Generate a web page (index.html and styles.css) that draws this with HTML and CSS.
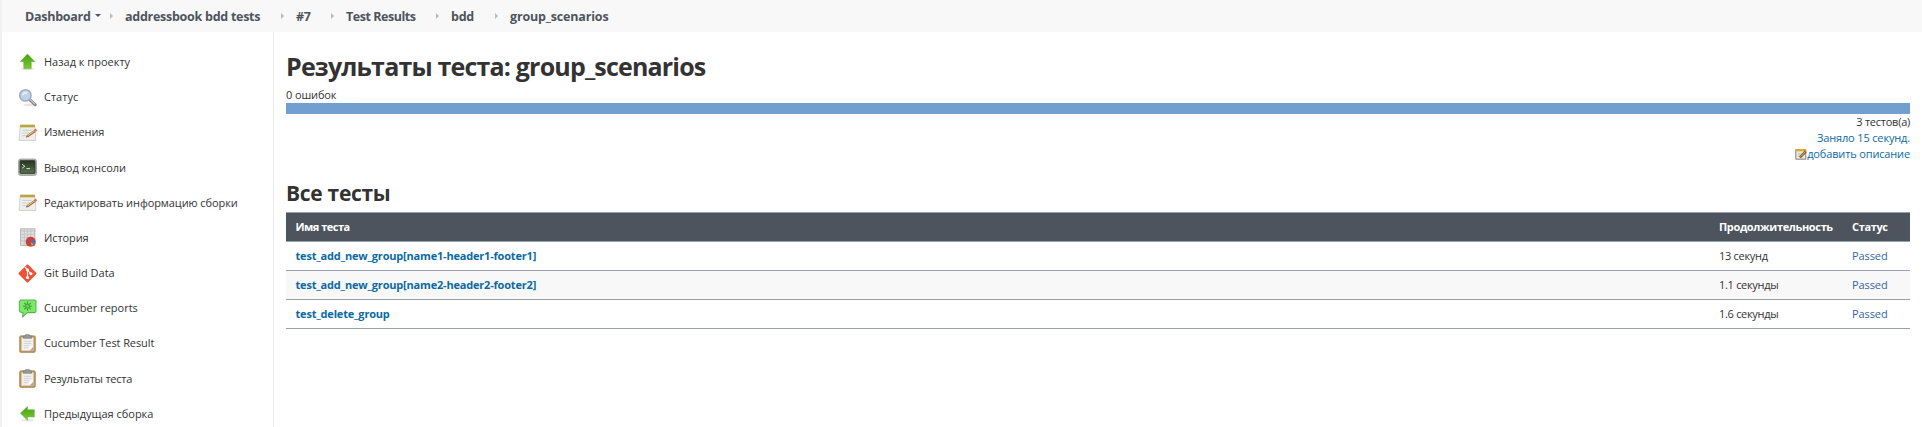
FILE: index.html
```html
<!DOCTYPE html>
<html lang="ru">
<head>
<meta charset="utf-8">
<title>group_scenarios</title>
<link rel="stylesheet" href="styles.css">
</head>
<body>
<svg class="defs" width="0" height="0">
  <defs>
    <linearGradient id="green" x1="0" y1="0" x2="0" y2="1"><stop offset="0" stop-color="#45a01c"/><stop offset="1" stop-color="#7cc92e"/></linearGradient>
    <linearGradient id="screen" x1="0" y1="0" x2="0" y2="1"><stop offset="0" stop-color="#24331f"/><stop offset="1" stop-color="#5a7450"/></linearGradient>
    <symbol id="i-notepad" viewBox="0 0 18 18">
      <path d="M2 3h14l1 13.5H1z" fill="#eeeeec" stroke="#c4c4c0" stroke-width=".7"/>
      <path d="M2 1.5h14v2.6H2z" fill="#b9a544"/><path d="M2 1.4h14" stroke="#ece6c4" stroke-dasharray="1 1"/>
      <path d="M4 7h9M4 9.5h7M4 12h5" stroke="#c9c9c7" stroke-width=".8"/>
      <path d="M9 12.5l7-5" stroke="#a8743a" stroke-width="2.3"/><path d="M9.2 12l6.4-4.6" stroke="#e8bd78" stroke-width="1"/>
      <path d="M15.5 7.6l2-1.4" stroke="#d8736a" stroke-width="2.4"/><path d="M7.2 13.8l1.3-1.9 1.3 1.4z" fill="#666"/>
    </symbol>
    <symbol id="i-clip" viewBox="0 0 18 18">
      <rect x="1.7" y="1.8" width="14.6" height="15.5" rx="1" fill="#c39a5e" stroke="#a3763a" stroke-width=".8"/>
      <path d="M3.3 3.2h11.4v12.6H3.3z" fill="#f0f0ee"/><path d="M14.7 11.5v4.3h-4z" fill="#aaa"/><path d="M14.7 11.5l-3.8.4-.4 3.9z" fill="#fff"/>
      <path d="M5.5 7h7M5.5 9h7M5.5 11h5M5.5 13h4" stroke="#ccc" stroke-width=".7"/>
      <path d="M5 4V1.8h2.2V.6h3.6v1.2H13V4z" fill="#989c96" stroke="#70746e" stroke-width=".6"/>
    </symbol>
  </defs>
</svg>
<header class="crumbs">
  <a class="crumb crumb-home">Dashboard<i class="caret"></i></a>
  <a class="crumb crumb-job">addressbook bdd tests</a>
  <a class="crumb crumb-build">#7</a>
  <a class="crumb crumb-results">Test Results</a>
  <a class="crumb crumb-pkg">bdd</a>
  <a class="crumb crumb-last">group_scenarios</a>
</header>
<div class="page">
  <nav class="side">
    <a class="task"><svg class="icon" viewBox="0 0 18 18"><ellipse cx="9" cy="16" rx="6" ry="1" fill="#ddd"/><path d="M9 2l6.8 7h-3.3v6.5h-7V9H2.2z" fill="url(#green)" stroke="#5fae2f" stroke-width=".6"/></svg><span>Назад к проекту</span></a>
    <a class="task"><svg class="icon" viewBox="0 0 18 18"><ellipse cx="11" cy="16" rx="6" ry="1.3" fill="#e4e4e4"/><path d="M11 11l5.2 4.8" stroke="#8b8b8b" stroke-width="3" stroke-linecap="round"/><path d="M11.5 11l4.3 4" stroke="#ccc" stroke-width="1.1"/><circle cx="7" cy="7" r="5.4" fill="#b9d2ee" stroke="#a7adb5" stroke-width="1.4"/><path d="M3.7 7.3a3.4 3.4 0 0 1 6-2.6z" fill="#e3eefa"/></svg><span>Статус</span></a>
    <a class="task"><svg class="icon"><use href="#i-notepad"/></svg><span class="tight">Изменения</span></a>
    <a class="task"><svg class="icon" viewBox="0 0 18 18"><rect x=".5" y="1" width="17" height="15.5" rx="2" fill="#b5b7b2" stroke="#9b9d98" stroke-width=".8"/><rect x="2" y="2.6" width="14" height="11.8" rx=".6" fill="url(#screen)" stroke="#30362d"/><path d="M4 6l2.5 1.8L4 9.6M8 10h3.3" fill="none" stroke="#dde8d8" stroke-width=".9"/></svg><span>Вывод консоли</span></a>
    <a class="task"><svg class="icon"><use href="#i-notepad"/></svg><span class="tight">Редактировать информацию сборки</span></a>
    <a class="task"><svg class="icon" viewBox="0 0 18 18"><rect x="2.5" y=".8" width="13.5" height="15.8" fill="#dedede" stroke="#aaa" stroke-width=".8"/><path d="M3 3h13M3 6h13M3 9h9M3 12h5M6 1v15M9 1v9M12 1v8" stroke="#bbb" stroke-width=".6"/><circle cx="12" cy="13" r="4.8" fill="#c9403e"/><path d="M12 13l1-3 3.2 1.4-.8 3.4z" fill="#4a72b8" transform="translate(0 1)"/><path d="M12 13.5l1 3.4 2-1.6z" fill="#dfa635"/></svg><span class="tight">История</span></a>
    <a class="task"><svg class="icon" viewBox="0 0 18 18"><rect x="2.7" y="2.7" width="12.6" height="12.6" rx="1" transform="rotate(45 9 9)" fill="#f05033"/><path d="M6.2 2.5L9 5.3v8M9 6l3.2 3.2" fill="none" stroke="#fff" stroke-width="1.1"/><g fill="#fff"><circle cx="9" cy="5.6" r="1.4"/><circle cx="9" cy="12.8" r="1.5"/><circle cx="12.2" cy="9.2" r="1.5"/></g></svg><span>Git Build Data</span></a>
    <a class="task"><svg class="icon" viewBox="0 0 18 18"><path d="M2.5 1h13.3l1.2 1v9.6l-1 1.3H9l-4.6 4 .3-4L2 12.4 1.3 11V2.3z" fill="#7de86a" stroke="#55b54c"/><g stroke="#3a9e35" stroke-width="1"><path d="M9 2.4v8.8M4.6 6.8h8.8M5.9 3.7l6.2 6.2M12.1 3.7L5.9 9.9"/></g><circle cx="9" cy="6.8" r="2.1" fill="#62cc51" stroke="#3a9e35" stroke-width=".7"/></svg><span>Cucumber reports</span></a>
    <a class="task"><svg class="icon"><use href="#i-clip"/></svg><span class="tight">Cucumber Test Result</span></a>
    <a class="task"><svg class="icon"><use href="#i-clip"/></svg><span class="tighter">Результаты теста</span></a>
    <a class="task"><svg class="icon" viewBox="0 0 18 18"><ellipse cx="9" cy="15.5" rx="6" ry="1" fill="#e2e2e2"/><path d="M2.2 8.7L9 2.3v3.2h6.5v6.7H9v3.2z" fill="url(#green)" stroke="#74bd48" stroke-width=".6"/></svg><span>Предыдущая сборка</span></a>
  </nav>
  <main class="main">
    <h1 class="title">Результаты теста: group_scenarios</h1>
    <div class="fails">0 ошибок</div>
    <div class="bar"></div>
    <div class="summary">
      <div class="count">3 тестов(а)</div>
      <a class="took">Заняло 15 секунд.</a>
      <a class="describe"><svg class="small" viewBox="0 0 12 12"><path d="M.8 1.5h10v9.7H.8z" fill="#e7e7e3" stroke="#85857c"/><path d="M.5 1h10.6v2.3H.5z" fill="#dda832"/><path d="M3 6h4M3 8h2" stroke="#bbb"/><path d="M5 9.5l5.8-6.2" stroke="#73581f" stroke-width="2.5"/><path d="M5.6 8.8l4.8-5.1" stroke="#d5b46b"/></svg><span>добавить описание</span></a>
    </div>
    <h2 class="subtitle">Все тесты</h2>
    <table class="tests">
      <thead><tr><th class="name">Имя теста</th><th class="dur">Продолжительность</th><th class="stat">Статус</th></tr></thead>
      <tbody>
        <tr><td class="name">test_add_new_group[name1-header1-footer1]</td><td class="dur">13 секунд</td><td class="stat">Passed</td></tr>
        <tr><td class="name">test_add_new_group[name2-header2-footer2]</td><td class="dur">1.1 секунды</td><td class="stat">Passed</td></tr>
        <tr><td class="name">test_delete_group</td><td class="dur">1.6 секунды</td><td class="stat">Passed</td></tr>
      </tbody>
    </table>
  </main>
</div>
</body>
</html>
```
FILE: styles.css
```css
* { box-sizing: border-box; }
body { margin: 0; height: 427px; overflow: hidden; background: #fff; color: #333; font: 11px/16px "Open Sans", "Noto Sans", sans-serif; border-left: 2px solid #f0f0f0; }
.defs { display: block; height: 0; }
.crumbs { display: flex; height: 32px; padding-left: 23px; background: #f8f8f8; align-items: center; font-size: 12.5px; font-weight: 700; color: #4d545d; white-space: nowrap; }
.crumb { position: relative; line-height: 32px; padding-top: 1px; letter-spacing: -.27px; }
.crumb + .crumb::before { content: ""; position: absolute; left: -15px; top: 13px; border: 3px solid transparent; border-left-color: #bbb; border-right: 0; }
.crumb-home { width: 100px; }
.crumb-job { width: 171px; }
.crumb-build { width: 50px; }
.crumb-results { width: 105px; letter-spacing: -.46px; }
.crumb-pkg { width: 59px; }
.crumb-last { letter-spacing: -.17px; }
.caret { display: inline-block; margin-left: 4px; vertical-align: 4px; border: 3px solid transparent; border-top-color: #4d545d; border-bottom: 0; }
.page { display: flex; height: 395px; }
.side { width: 272px; flex: none; padding-top: 12.4px; border-right: 1px solid #eaeaea; }
.task { display: flex; align-items: center; height: 35.2px; padding-left: 16px; white-space: nowrap; }
.tight { letter-spacing: -.09px; }
.tighter { letter-spacing: -.25px; }
.icon { width: 19px; height: 19px; margin-right: 7px; flex: none; }
.main { flex: 1; padding: 17px 12px 0 12px; }
.title { margin: 0 0 1px; font-size: 25px; line-height: 34px; letter-spacing: -.82px; white-space: nowrap; }
.fails { height: 19px; line-height: 22px; letter-spacing: -.12px; }
.bar { height: 11px; background: #729fcf; }
.summary { display: flex; flex-direction: column; align-items: flex-end; letter-spacing: -.15px; }
.count { letter-spacing: -.25px; }
.took, .describe { color: #0b6aa2; }
.describe { display: flex; align-items: center; }
.small { width: 12px; height: 12px; }
.subtitle { margin: 16px 0 4px; font-size: 21px; line-height: 30px; letter-spacing: -.3px; }
.tests { width: 1624px; border-spacing: 0; border-top: 1px solid #98a2ac; table-layout: fixed; text-align: left; }
.tests th, .tests td { height: 29px; padding: 0 0 0 10px; border-bottom: 1px solid #98a2ac; line-height: 16px; }
.tests th { background: #4d545d; color: #fff; letter-spacing: -.35px; }
.tests th.name { letter-spacing: -.5px; }
.tests tbody tr:nth-child(2) { background: #f8f8f8; }
.dur { width: 133px; letter-spacing: -.3px; }
.stat { width: 68px; }
.tests .name { padding-left: 9.5px; }
td.name { font-weight: 700; color: #0b6aa2; letter-spacing: -.19px; }
td.stat { color: #3465a4; letter-spacing: -.1px; }
```
